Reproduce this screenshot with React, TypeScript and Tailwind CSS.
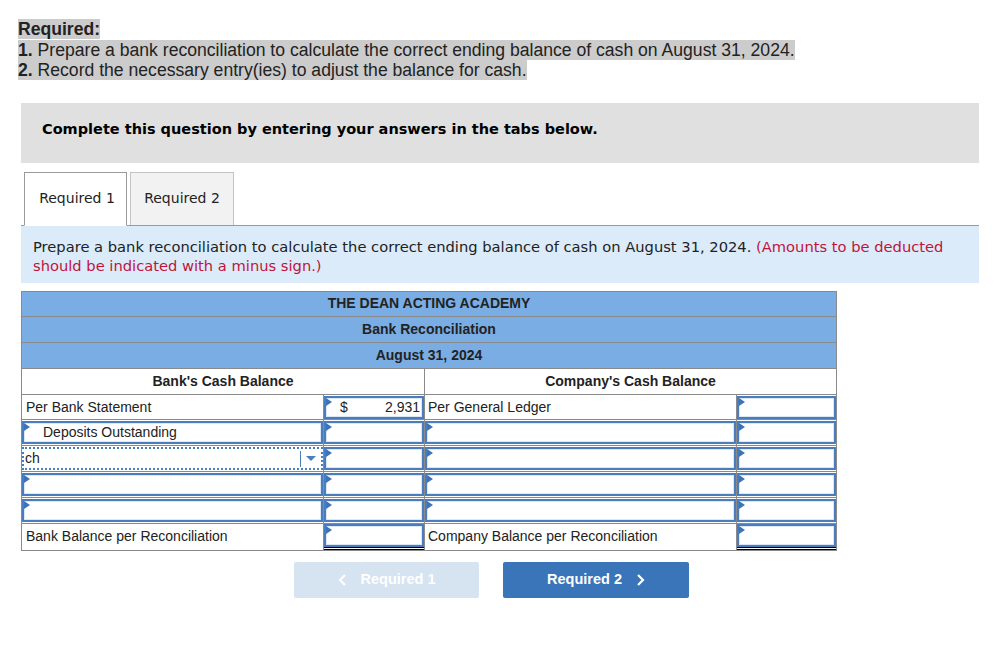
import React from 'react'

const arial = { fontFamily: '"Liberation Sans", Arial, sans-serif' }
const verdana = { fontFamily: '"DejaVu Sans", Verdana, sans-serif' }

function Flag() {
    return (
        <span className="absolute top-0 left-0 w-0 h-0 border-y-[4px] border-y-transparent border-l-[6px] border-l-[#3d72bd]" />
    )
}

function InputBox({ children, className = '' }: { children?: React.ReactNode; className?: string }) {
    return (
        <div className={`relative h-[23px] border-2 border-[#4a7dbd] shadow-[inset_0_0_0_1px_#dbe7f5] bg-white flex items-center ${className}`}>
            <Flag />
            {children}
        </div>
    )
}

function Cell({ children, className = '', colSpan }: { children?: React.ReactNode; className?: string; colSpan?: number }) {
    return (
        <td colSpan={colSpan} className={`border border-[#8a8a8a] p-0 h-[25.8px] align-middle ${className}`}>
            {children}
        </td>
    )
}

function TotalBox() {
    return (
        <div className="border-b-[3px] border-double border-black">
            <InputBox />
        </div>
    )
}

export default function App() {
    return (
        <div className="bg-white w-[1002px] h-[652px] text-[#222]">
            {/* Required list */}
            <div className="pt-[19px] pl-[18px] text-[17.6px] leading-[20.5px] text-[#222]" style={arial}>
                <div><span className="bg-[#cccccc] font-bold">Required:</span></div>
                <div>
                    <span className="bg-[#cccccc]"><b>1.</b> Prepare a bank reconciliation to calculate the correct ending balance of cash on August 31, 2024.</span>
                </div>
                <div>
                    <span className="bg-[#cccccc]"><b>2.</b> Record the necessary entry(ies) to adjust the balance for cash.</span>
                </div>
            </div>

            {/* Prompt box */}
            <div className="mt-[22px] ml-[21px] mr-[23px] h-[60px] bg-[#e0e0e0] pl-[21px] pt-[13px]">
                <span className="text-[14.5px] font-bold text-black" style={verdana}>
                    Complete this question by entering your answers in the tabs below.
                </span>
            </div>

            {/* Tabs */}
            <div className="mt-[9px] ml-[21px] mr-[23px] flex items-end border-b border-[#9a9a9a] h-[54px]" style={verdana}>
                <div className="ml-[3px] w-[103px] h-[54px] -mb-px bg-white border border-[#9a9a9a] border-b-white flex items-center justify-center pl-[3px] text-[14px] text-[#222]">
                    Required 1
                </div>
                <div className="ml-[3px] w-[104px] h-[53px] bg-[#f2f2f2] border border-[#c4c4c4] border-b-0 flex items-center justify-center text-[14px] text-[#222]">
                    Required 2
                </div>
            </div>

            {/* Instruction */}
            <div className="ml-[21px] mr-[23px] h-[57px] bg-[#dbebf9] pl-[12px] pt-[11px] text-[14.7px] leading-[19px]" style={verdana}>
                <span className="text-[#222]">Prepare a bank reconciliation to calculate the correct ending balance of cash on August 31, 2024. </span>
                <span className="text-[#c0143c]">(Amounts to be deducted should be indicated with a minus sign.)</span>
            </div>

            {/* Reconciliation table */}
            <table className="mt-[8px] ml-[21px] border-collapse table-fixed w-[815px] text-[14px] text-[#222]" style={arial}>
                <colgroup>
                    <col className="w-[302px]" />
                    <col className="w-[101px]" />
                    <col className="w-[312px]" />
                    <col className="w-[100px]" />
                </colgroup>
                <tbody>
                    <tr className="bg-[#7aade4]">
                        <Cell colSpan={4} className="text-center font-bold">THE DEAN ACTING ACADEMY</Cell>
                    </tr>
                    <tr className="bg-[#7aade4]">
                        <Cell colSpan={4} className="text-center font-bold">Bank Reconciliation</Cell>
                    </tr>
                    <tr className="bg-[#7aade4]">
                        <Cell colSpan={4} className="text-center font-bold">August 31, 2024</Cell>
                    </tr>
                    <tr>
                        <Cell colSpan={2} className="text-center font-bold">Bank's Cash Balance</Cell>
                        <Cell colSpan={2} className="text-center font-bold">Company's Cash Balance</Cell>
                    </tr>
                    <tr>
                        <Cell className="pl-[4px]">Per Bank Statement</Cell>
                        <Cell>
                            <InputBox className="justify-between pl-[14px] pr-[2px]">
                                <span>$</span>
                                <span>2,931</span>
                            </InputBox>
                        </Cell>
                        <Cell className="pl-[3px]">Per General Ledger</Cell>
                        <Cell><InputBox /></Cell>
                    </tr>
                    <tr>
                        <Cell><InputBox className="pl-[19px]">Deposits Outstanding</InputBox></Cell>
                        <Cell><InputBox /></Cell>
                        <Cell><InputBox /></Cell>
                        <Cell><InputBox /></Cell>
                    </tr>
                    <tr>
                        <Cell>
                            <div className="relative h-[23px] border-2 border-dotted border-[#4a7dbd] bg-white flex items-center pl-[1px]">
                                <span>ch</span>
                                <span className="absolute right-[20px] top-[2px] h-[16px] w-px bg-[#4a7dbd]" />
                                <span className="absolute right-[5px] top-[7px] w-0 h-0 border-x-[5px] border-x-transparent border-t-[5px] border-t-[#4a7dbd]" />
                            </div>
                        </Cell>
                        <Cell><InputBox /></Cell>
                        <Cell><InputBox /></Cell>
                        <Cell><InputBox /></Cell>
                    </tr>
                    <tr>
                        <Cell><InputBox /></Cell>
                        <Cell><InputBox /></Cell>
                        <Cell><InputBox /></Cell>
                        <Cell><InputBox /></Cell>
                    </tr>
                    <tr>
                        <Cell><InputBox /></Cell>
                        <Cell><InputBox /></Cell>
                        <Cell><InputBox /></Cell>
                        <Cell><InputBox /></Cell>
                    </tr>
                    <tr>
                        <Cell className="pl-[4px]">Bank Balance per Reconciliation</Cell>
                        <Cell className="align-top"><TotalBox /></Cell>
                        <Cell className="pl-[3px]">Company Balance per Reconciliation</Cell>
                        <Cell className="align-top"><TotalBox /></Cell>
                    </tr>
                </tbody>
            </table>

            {/* Navigation */}
            <div className="mt-[11px] ml-[294px] flex gap-[24px]" style={arial}>
                <button className="w-[185px] h-[36px] rounded-[2px] bg-[#d6e3f1] text-white font-bold text-[14.5px] flex items-center justify-center gap-[14px]">
                    <svg width="9" height="12" viewBox="0 0 9 12" fill="none" stroke="white" strokeWidth="2.2">
                        <path d="M7 1 L2 6 L7 11" />
                    </svg>
                    <span>Required 1</span>
                </button>
                <button className="w-[186px] h-[36px] rounded-[2px] bg-[#3a75b9] text-white font-bold text-[14.5px] flex items-center justify-center gap-[14px]">
                    <span>Required 2</span>
                    <svg width="9" height="12" viewBox="0 0 9 12" fill="none" stroke="white" strokeWidth="2.2">
                        <path d="M2 1 L7 6 L2 11" />
                    </svg>
                </button>
            </div>
        </div>
    )
}
